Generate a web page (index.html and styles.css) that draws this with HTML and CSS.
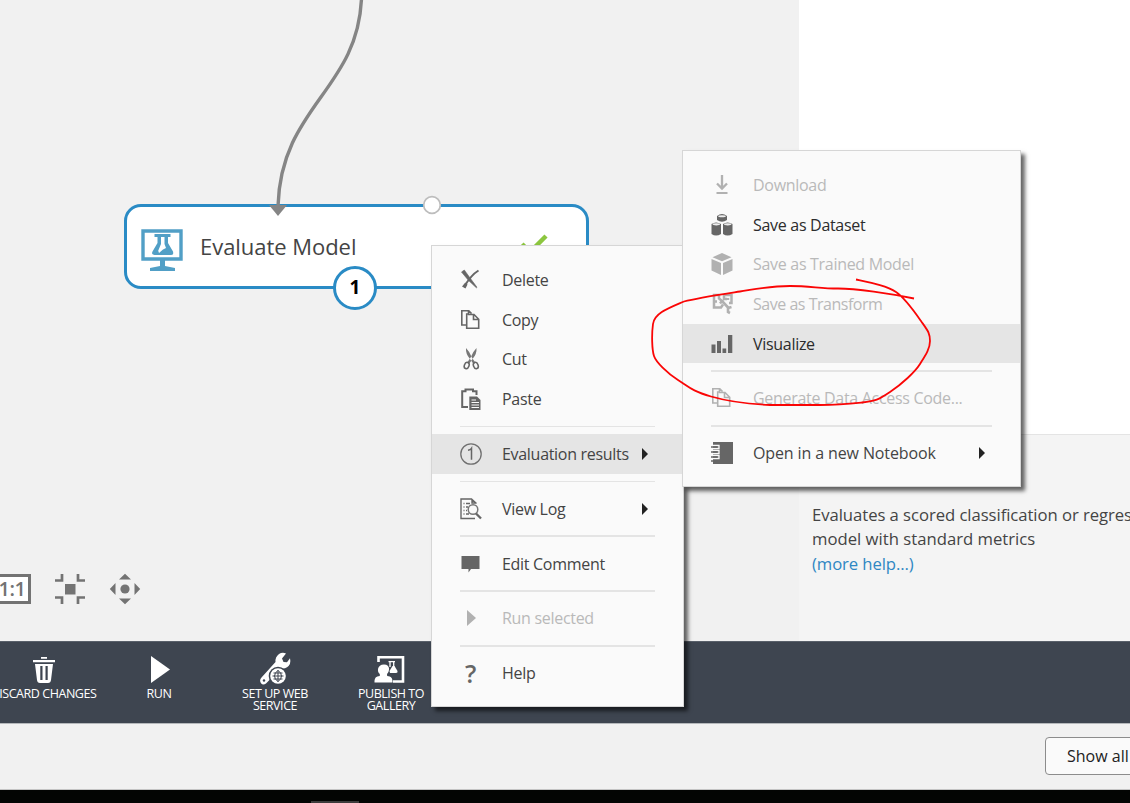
FILE: index.html
```html
<!DOCTYPE html>
<html lang="en">
<head>
<meta charset="utf-8">
<title>Evaluate Model</title>
<link rel="stylesheet" href="styles.css">
</head>
<body>
<div class="app">
  <main class="workspace">
    <section class="canvas">
      <div class="node">
        <svg class="node-icon" width="42" height="42" viewBox="0 0 42 42"><path d="M2 2h38v28H2z" fill="none" stroke="#519fc6" stroke-width="3.4"/><path d="M19 30h5v7l10 2v3H9v-3l10-2z" fill="#519fc6"/><path d="M13.500 5h16v3h-2.500v6l5 8.500q1 3.500-2 3.500H13.500q-3.500-.5-2-3.500l5-8.500V8h-3z" fill="#519fc6"/><path d="M20 8h3.500v7l1.500 4-3 1.500-4 3.500-.8-2.300L20 15z" fill="#fff"/></svg>
        <span class="node-title">Evaluate Model</span>
        <svg class="node-check" width="28" height="22" viewBox="0 0 28 22"><path d="M2 10l8 8L26 2" fill="none" stroke="#8cc63f" stroke-width="4.500"/></svg>
      </div>
      <svg class="wire" width="600" height="320" viewBox="0 0 600 320"><path d="M361.500-2C358 90 281 106 278 206" fill="none" stroke="#858585" stroke-width="3.400"/><path d="M269 205h18l-9 11z" fill="#858585"/><circle cx="432" cy="205" r="8.300" fill="#fff" stroke="#bdbdbd" stroke-width="1.700"/></svg>
      <span class="badge">1</span>
      <div class="view-tools">
        <span class="ratio">1:1</span>
        <svg width="32" height="32" viewBox="0 0 32 32"><path d="M11 11h10.500v10.500H11z" fill="#737373"/><path d="M1 7.500h7V1M31 7.500h-7V1M1 24.500h7V31M31 24.500h-7V31" fill="none" stroke="#737373" stroke-width="2.700"/></svg>
        <svg width="32" height="32" viewBox="0 0 32 32" fill="#737373"><circle cx="16" cy="16" r="4.600"/><path d="M10 6.500h12L16 .8zM10 25.500h12l-6 5.700zM6.500 10v12L.8 16zM25.500 10v12l5.700-6z"/></svg>
      </div>
    </section>
    <aside class="side">
      <div class="properties"></div>
      <div class="quick-help">
        <p>Evaluates a scored classification or regression</p>
        <p>model with standard metrics</p>
        <a>(more help...)</a>
      </div>
    </aside>
  </main>

  <nav class="toolbar">
    <div class="tool"><svg width="32" height="30" viewBox="0 0 32 30"><path d="M5 4h22v2.300H5zM13 1h6v1.700h-6zM7 8h18l-2 16q-.3 3-3 3h-8q-2.700 0-3-3z" fill="#fff"/><path d="M13.400 10v14M18.600 10v14" stroke="#3e4550" stroke-width="2.200"/></svg><span>DISCARD CHANGES</span></div>
    <div class="tool"><svg width="32" height="30" viewBox="0 0 32 30"><path d="M8 0l19 13.500L8 27z" fill="#fff"/></svg><span>RUN</span></div>
    <div class="tool"><svg width="32" height="30" viewBox="0 0 32 30"><path d="M20-2q3.500-2.400 7-.5l-4 5 1.500 3.500 3.500.2 3-4q1.500 6-3 9-2.800 1.800-6 1L7 27.500q-3 2-5-.3-1.900-3 .3-5.500L16.500 6Q16 1 20-2z" fill="#fff"/><circle cx="5" cy="24.500" r="1.200" fill="#3e4550"/><circle cx="19" cy="20" r="9.300" fill="#3e4550"/><circle cx="19" cy="20" r="7.800" fill="#fff"/><path d="M19 14.300v11.400M13.500 20h11M19 14.300q-7 5.700 0 11.400M19 14.300q7 5.700 0 11.400M14.500 17h9M14.500 23h9" fill="none" stroke="#3e4550" stroke-width="1"/></svg><span>SET UP WEB<br>SERVICE</span></div>
    <div class="tool"><svg width="32" height="30" viewBox="0 0 32 30"><path d="M3.500 6V1.300h24.500v24.200H18" fill="none" stroke="#fff" stroke-width="2.600"/><path d="M9 8.500c7 0 5.500 7.500 3 9.500l.2 2c4 .5 5.500 2 5.300 6.500H-.5c0-5 1.500-6 5.300-6.500V18c-3-2-2.800-9.500 4.200-9.500z" fill="#fff"/><path d="M13.500 5.700H20M15 6v5M18.700 6v5" stroke="#fff" stroke-width="1.300"/><path d="M17.500 10h2l3 5q.5 2-1.500 2h-6l-.5-2z" fill="#fff"/></svg><span>PUBLISH TO<br>GALLERY</span></div>
  </nav>
  <footer class="download-bar"><button class="show-all">Show all</button></footer>
  <div class="taskbar"><span class="task"></span></div>
</div>

<div class="menu context-menu">
  <div class="item"><svg width="22" height="22" viewBox="0 0 22 22"><path d="M1.500 3l2.800-2Q10 9 17 18.300l-.6.500Q8 12 1.500 3z" fill="#666" stroke="#666" stroke-width=".6"/><path d="M18.500 1.500Q11 6 4 18" fill="none" stroke="#666" stroke-width="2"/><path d="M2 17.500l3.500 2 2-4-2.200-2z" fill="#666"/></svg><span>Delete</span></div>
  <div class="item"><svg width="22" height="22" viewBox="0 0 22 22"><path d="M6.500 16H1.800V1.700h7l2.700 2.800M8.500 2v3H6.700v14.300h12v-9L14 5.500H8M13.500 5.500v5h5" fill="none" stroke="#666" stroke-width="1.600"/></svg><span>Copy</span></div>
  <div class="item"><svg width="22" height="22" viewBox="0 0 22 22"><path d="M6 0q-.5 6 4 11l3.500 5 2-1.200-3.500-5Q10 4 6 0zM16.500 0q.5 6-4 11L9 16l-2-1.200 3.500-5Q12.500 4 16.500 0z" fill="#777"/><ellipse cx="6.700" cy="17.500" rx="2.300" ry="3.300" transform="rotate(20 6.700 17.500)" fill="none" stroke="#666" stroke-width="1.600"/><ellipse cx="15.800" cy="17.500" rx="2.300" ry="3.300" transform="rotate(-20 15.800 17.500)" fill="none" stroke="#666" stroke-width="1.600"/></svg><span>Cut</span></div>
  <div class="item"><svg width="22" height="22" viewBox="0 0 22 22"><path d="M8 19H2.200V3.200H5.500V1.500H13v1.700h3.500V7" fill="none" stroke="#666" stroke-width="2"/><path d="M9.300 8.500H17l3.500 3.500v10H9.300z" fill="#666"/><path d="M11.500 12h4.500M11.500 14.500H19M11.500 17H19M11.500 19.500H19" stroke="#fafafa" stroke-width="1"/></svg><span>Paste</span></div>
  <hr>
  <div class="item active"><svg width="22" height="22" viewBox="0 0 22 22"><circle cx="11" cy="11" r="10.200" fill="none" stroke="#707070" stroke-width="1.300"/><path d="M8 7.300Q10.500 7 11.500 5.400v11.300" fill="none" stroke="#666" stroke-width="1.500"/></svg><span>Evaluation results</span><i class="arrow"></i></div>
  <hr>
  <div class="item"><svg width="22" height="22" viewBox="0 0 22 22"><path d="M15 20.500H1V1h10.500l5 4.500M12 1v4h4M3.500 5.500h1M6 5.500h4M3.500 9h1M6 9h2M3.500 12.500h1M6 12.500h1M3.500 16h1M6 16h3" fill="none" stroke="#666" stroke-width="1.400"/><circle cx="13" cy="11.500" r="4.800" fill="none" stroke="#777" stroke-width="1.500"/><path d="M16 15.500l5 5" stroke="#666" stroke-width="2.300"/></svg><span>View Log</span><i class="arrow far"></i></div>
  <hr>
  <div class="item"><svg width="22" height="22" viewBox="0 0 22 22"><path d="M1.500 3h18v13H11L8.500 19.500V16h-7z" fill="#666"/></svg><span>Edit Comment</span></div>
  <hr>
  <div class="item disabled"><svg width="22" height="22" viewBox="0 0 22 22"><path d="M7 3l9 8-9 8z" fill="#b1b1b1"/></svg><span>Run selected</span></div>
  <hr>
  <div class="item"><b class="question">?</b><span>Help</span></div>
</div>

<div class="menu results-menu">
  <div class="item disabled"><svg width="22" height="22" viewBox="0 0 22 22"><path d="M11 1v13M6 9.500l5 5 5-5" fill="none" stroke="#b1b1b1" stroke-width="2.300"/><path d="M5.500 18h11v2h-11z" fill="#b1b1b1"/></svg><span>Download</span></div>
  <div class="item strong"><svg width="22" height="22" viewBox="0 0 22 22" fill="#666"><path d="M6 2q5-4 10 0v4q-5 3.500-10 0zM.5 10q4.500-3 9.500 0v10q-5 3-9.500 0zM12 10q4.500-3 9.500 0v10q-5 3-9.500 0z"/><ellipse cx="11" cy="2.300" rx="3.800" ry="1" fill="#eee"/><ellipse cx="5.300" cy="10.300" rx="3.700" ry="1.100" fill="#eee"/><ellipse cx="16.700" cy="10.300" rx="3.700" ry="1.100" fill="#eee"/></svg><span>Save as Dataset</span></div>
  <div class="item disabled"><svg width="22" height="22" viewBox="0 0 22 22" fill="#b1b1b1"><path d="M11 0l9.500 4.200L11 8.300 1.500 4.200zM.5 6l9.500 4v12L.5 17.500zM21.500 6L12 10v12l9.500-4.500z"/></svg><span>Save as Trained Model</span></div>
  <div class="item disabled"><svg width="22" height="22" viewBox="0 0 22 22"><path d="M8 2H3v12.500h7l2-3M3 8.500h3M8 2v3.500l3 2.500-2 2.500M13 2h7.500v8H18M13 2v4h3M17 5v2" fill="none" stroke="#b1b1b1" stroke-width="2.500"/><path d="M11 8l7 7.500M20.500 14l-3.500 1v4l2 1" fill="none" stroke="#b1b1b1" stroke-width="2.600"/></svg><span class="tight">Save as Transform</span></div>
  <div class="item active strong"><svg width="22" height="22" viewBox="0 0 22 22"><path d="M.5 11.500h4V20h-4zM6 8h4v12H6zM11.500 15.500h3.700V20h-3.700zM17 2h4.300v18H17z" fill="#666"/></svg><span>Visualize</span></div>
  <hr>
  <div class="item disabled"><svg width="22" height="22" viewBox="0 0 22 22"><path d="M6.500 16H1.800V1.700h7l2.700 2.800M8.500 2v3H6.700v14.300h12v-9L14 5.500H8M13.500 5.500v5h5" fill="none" stroke="#b1b1b1" stroke-width="1.600"/></svg><span>Generate Data Access Code...</span></div>
  <hr>
  <div class="item"><svg width="22" height="22" viewBox="0 0 22 22"><path d="M2 0h20v22H2z" fill="#666"/><path d="M1 3.500h7v3H1M1 8.500h7v3H1M1 13.500h7v3H1" fill="none" stroke="#fafafa" stroke-width="1.300"/><path d="M0 5h6.500M0 10h6.500M0 15h6.500M0 19h6.500" stroke="#666" stroke-width="1.300"/></svg><span class="loose">Open in a new Notebook</span><i class="arrow far"></i></div>
</div>

<svg class="marker" width="300" height="150" viewBox="640 270 300 150"><path d="M856 279.500C872 283 887 286 896 292S914 311 921 321 930 333 930 341 925 356 920 364 902 384 890 392 876 401 862 402.500 839 405 820 405H770C748 404 730 402 711 396.500S689 387 678 380 656 362 654 356 651.500 335 653 324 669 308 684 301.500C697 298 724 294 740 291.500S770 286 790 286 820 288.500 838 288.500 890 293.500 914 298.500" fill="none" stroke="#fa0505" stroke-width="1.800"/></svg>
</body>
</html>
```

FILE: styles.css
```css
* { box-sizing: border-box; }
body {
  margin: 0;
  overflow: hidden;
  font-family: "Open Sans", "Noto Sans", sans-serif;
  color: #444;
}
.app {
  display: flex;
  flex-direction: column;
  width: 1130px;
  height: 803px;
  overflow: hidden;
}
.workspace { display: flex; height: 641px; }
.canvas {
  position: relative;
  width: 799px;
  background: #f1f1f1;
  overflow: hidden;
}
.node {
  position: absolute;
  left: 124px;
  top: 204px;
  width: 465px;
  height: 85px;
  padding: 0 38px 0 14px;
  display: flex;
  align-items: center;
  border: 3px solid #2a8bc5;
  border-radius: 17px;
  background: #fff;
}
.node-icon { margin-top: 6px; }
.node-title {
  margin-left: 17px;
  margin-bottom: 2px;
  font-size: 22px;
  letter-spacing: -0.04px;
  line-height: 30px;
}
.node-check { margin-left: auto; margin-bottom: 3px; }
.wire { position: absolute; left: 0; top: 0; }
.badge {
  position: absolute;
  left: 333px;
  top: 266px;
  width: 44px;
  height: 44px;
  border: 3px solid #2a8bc5;
  border-radius: 50%;
  background: #fff;
  color: #000;
  font-size: 19px;
  font-weight: 700;
  line-height: 37px;
  text-align: center;
}
.view-tools {
  position: absolute;
  left: -7px;
  top: 573px;
  display: flex;
  align-items: center;
  gap: 23px;
}
.ratio {
  width: 38px;
  height: 30px;
  border: 3px solid #737373;
  background: #fff;
  color: #737373;
  font-size: 20px;
  font-weight: 600;
  line-height: 24px;
  text-align: center;
  letter-spacing: -0.5px;
}
.side { width: 331px; display: flex; flex-direction: column; }
.properties { height: 434px; background: #fff; }
.quick-help {
  flex: 1;
  padding: 67.500px 0 0 13px;
  border-top: 1px solid #e4e4e4;
  background: #f4f4f4;
  font-size: 16.7px;
  line-height: 24.500px;
  white-space: nowrap;
}
.quick-help p { margin: 0; }
.quick-help p:first-child { letter-spacing: -0.06px; }
.quick-help a { color: #2f87c3; letter-spacing: -0.1px; }
.toolbar {
  display: flex;
  height: 82px;
  padding-top: 14px;
  margin-left: -15px;
  background: #3e4550;
  border-top: 1px solid #59606a;
}
.tool {
  width: 116px;
  display: flex;
  flex-direction: column;
  align-items: center;
  color: #fff;
  font-size: 12.500px;
  letter-spacing: -0.45px;
  line-height: 12px;
  text-align: center;
  white-space: nowrap;
}
.tool:first-child { padding-left: 1px; }
.tool svg { overflow: visible; margin-bottom: 2px; }
.download-bar {
  display: flex;
  align-items: center;
  height: 67px;
  padding-left: 1045px;
  padding-bottom: 2px;
  border-top: 1px solid #b5b8bb;
  border-bottom: 1px solid #c4c4c4;
  background: #f1f1f1;
}
.show-all {
  flex: none;
  width: 120px;
  height: 38px;
  padding: 0 0 0 21px;
  border: 1.500px solid #8c8c8c;
  border-radius: 4px;
  background: #fafafa;
  color: #222;
  font: 500 16px "Open Sans", sans-serif;
  text-align: left;
}
.taskbar {
  display: flex;
  align-items: flex-end;
  height: 13px;
  padding-left: 311px;
  background: #030503;
}
.task { width: 48px; height: 2px; background: #3c3c3c; }
.menu {
  position: absolute;
  padding: 14px 0 13px;
  border: 1.500px solid #d6d6d6;
  background: #fafafa;
  font-size: 16px;
  letter-spacing: -0.3px;
  box-shadow: 4px 4px 4px rgba(0, 0, 0, .6);
}
.context-menu { left: 431px; top: 245px; width: 253px; height: 462px; }
.results-menu { left: 682px; top: 150px; width: 339px; height: 337px; }
.item {
  display: flex;
  align-items: center;
  height: 39.700px;
  padding: 0 29px 0 27.500px;
  white-space: nowrap;
}
.item svg { flex: none; }
.item span { margin-left: 20.500px; }
.item .tight { letter-spacing: -0.48px; }
.item .loose { letter-spacing: -0.12px; }
.active { background: #e5e5e5; }
.strong { color: #2c2c2c; }
.disabled { color: #b9b9b9; }
.menu hr {
  height: 1.500px;
  margin: 6.900px 28px 6.800px;
  border: 0;
  background: #e4e4e4;
}
.arrow {
  margin-left: 13px;
  border-left: 6px solid #222;
  border-top: 6px solid transparent;
  border-bottom: 6px solid transparent;
}
.arrow.far { margin-left: auto; margin-right: 6px; }
.question {
  width: 22px;
  color: #666;
  font-size: 25px;
  font-weight: 600;
  text-align: center;
}
.marker { position: absolute; left: 640px; top: 270px; }
```
